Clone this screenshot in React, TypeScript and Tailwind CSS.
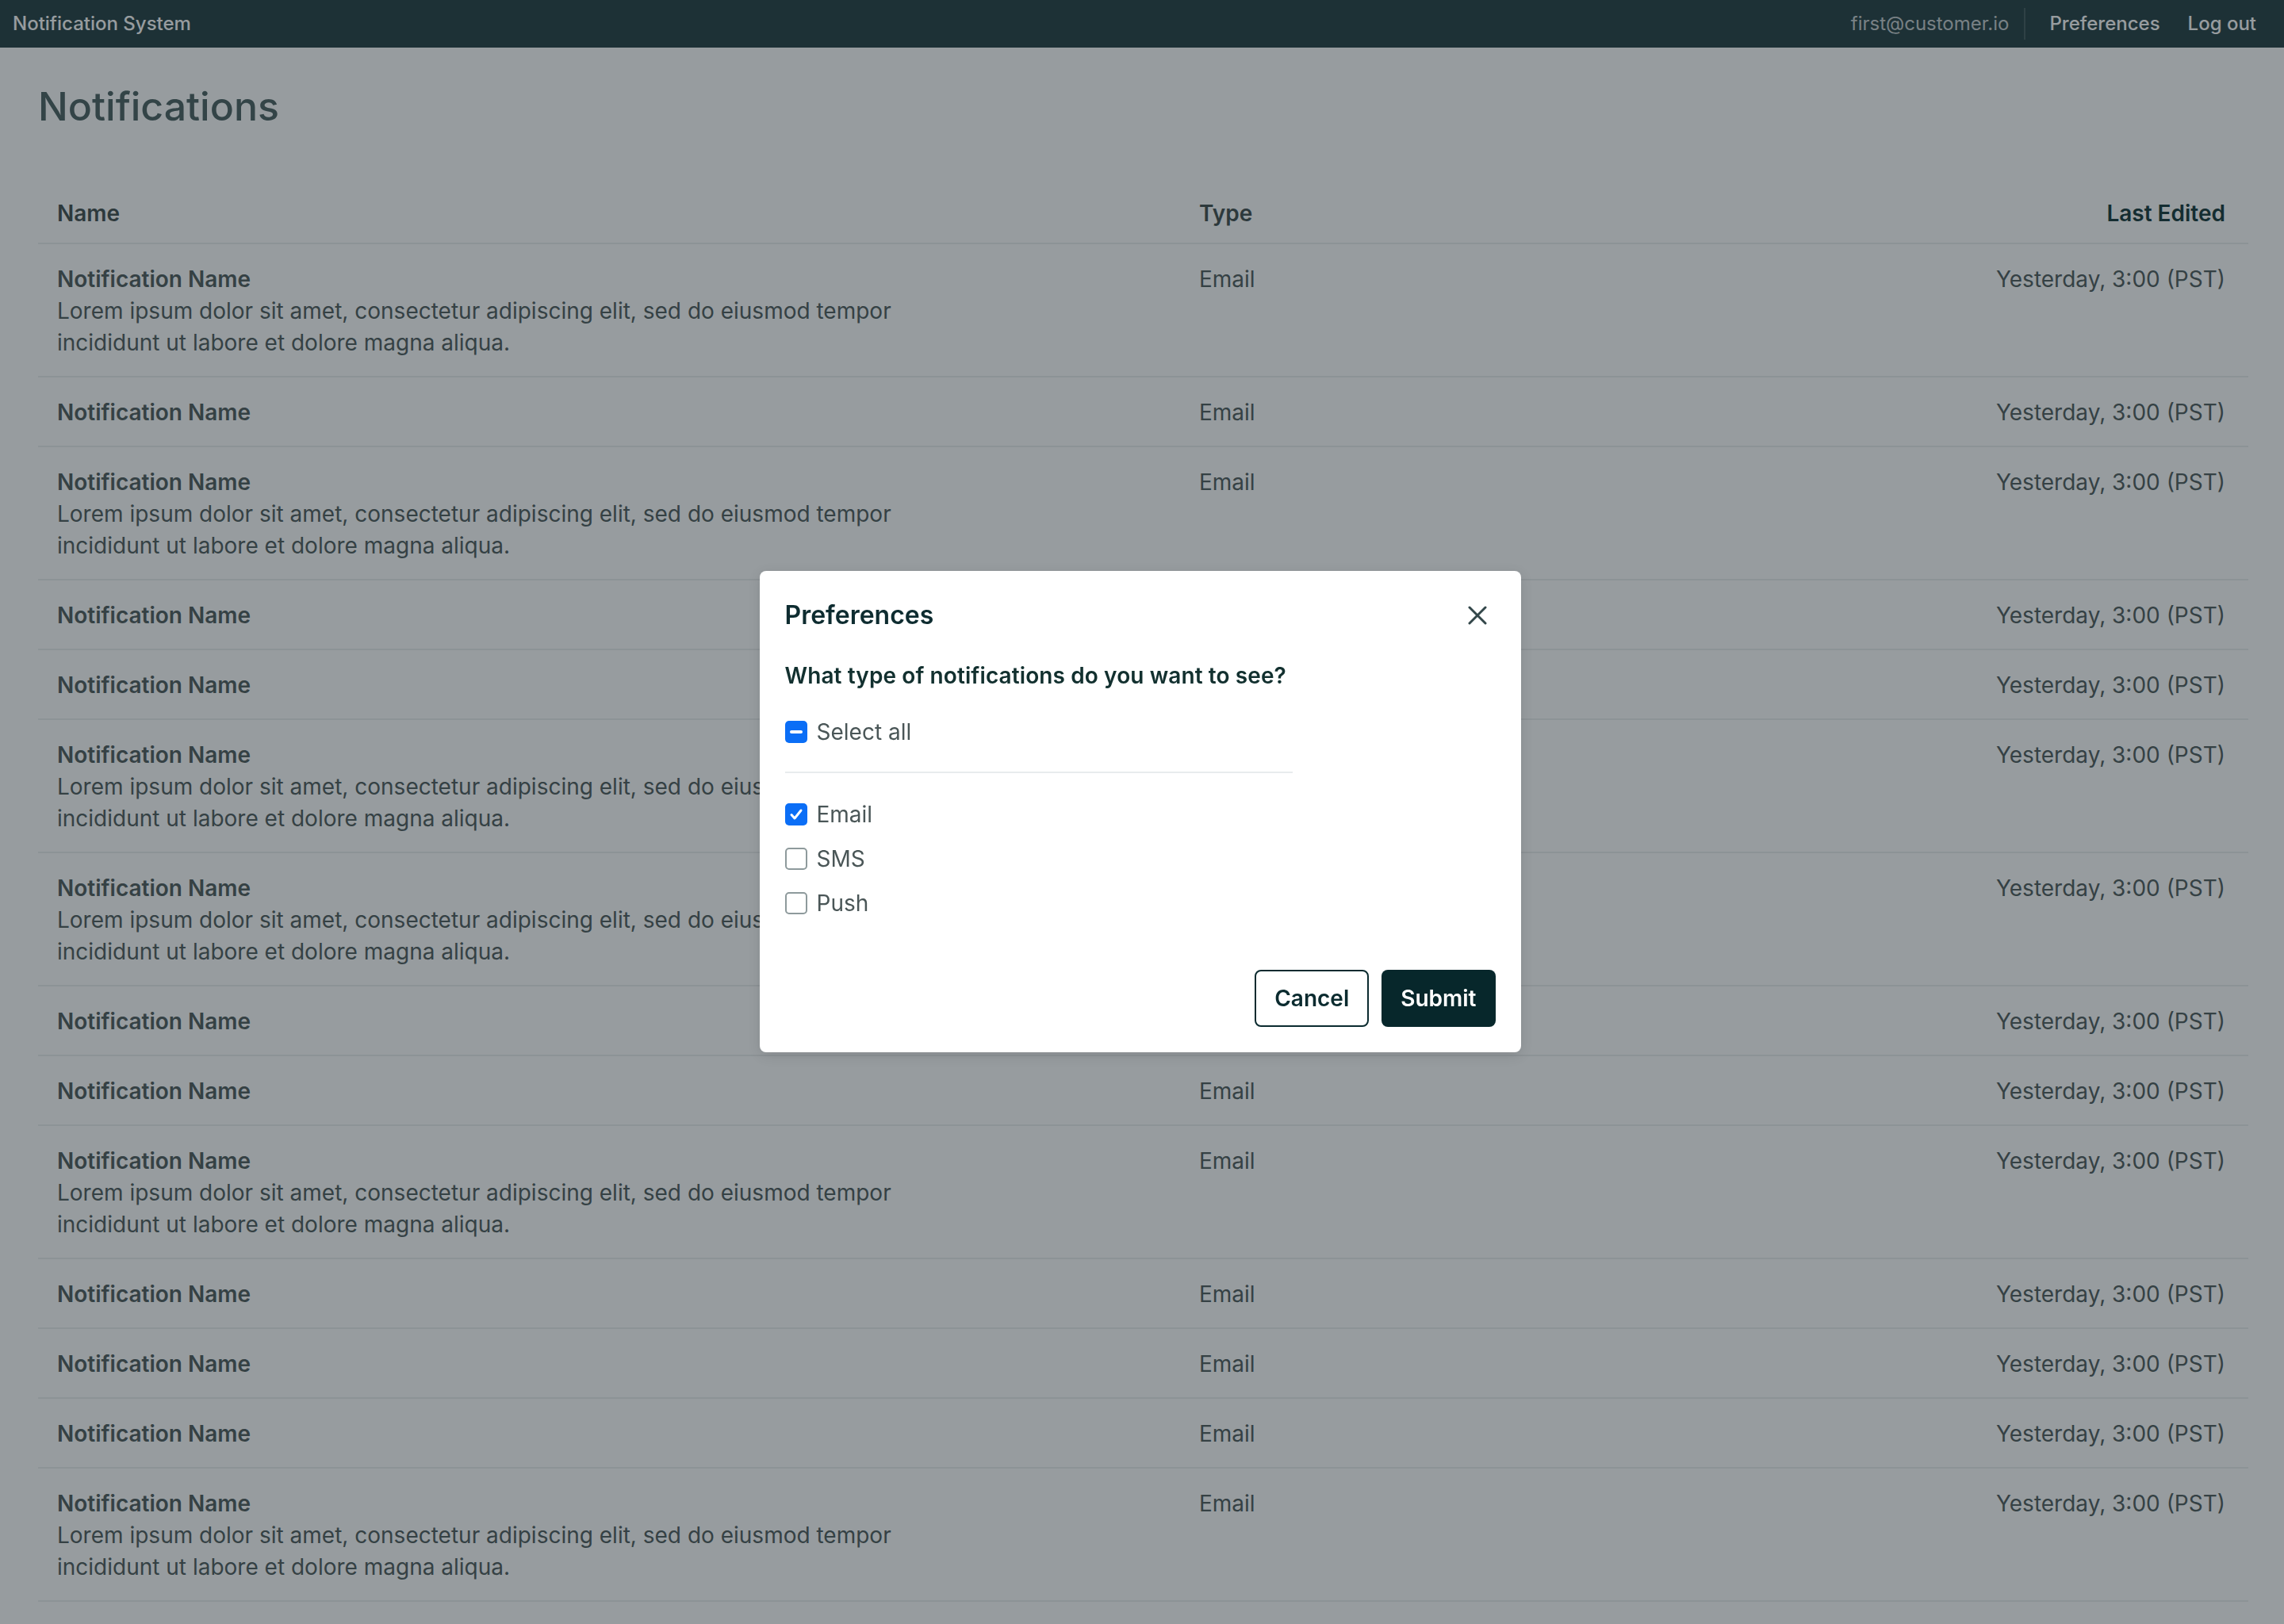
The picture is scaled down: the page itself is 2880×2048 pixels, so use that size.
import { useState } from "react";

type Row = { name: string; desc?: boolean; type: string; edited: string };

const LOREM_1 = "Lorem ipsum dolor sit amet, consectetur adipiscing elit, sed do eiusmod tempor";
const LOREM_2 = "incididunt ut labore et dolore magna aliqua.";

const pattern = [true, false, true, false, false, true, true, false, false, true, false, false, false, true];

const rows: Row[] = pattern.map((desc) => ({
  name: "Notification Name",
  desc,
  type: "Email",
  edited: "Yesterday, 3:00 (PST)",
}));

function Checkbox({
  state,
  label,
  onClick,
}: {
  state: "checked" | "unchecked" | "indeterminate";
  label: string;
  onClick?: () => void;
}) {
  return (
    <label className="flex h-[40px] items-center gap-[12px] cursor-pointer" onClick={onClick}>
      {state === "unchecked" ? (
        <span className="h-[28px] w-[28px] rounded-[5px] border-2 border-[#8e9a9c] bg-white" />
      ) : (
        <span className="flex h-[28px] w-[28px] items-center justify-center rounded-[5px] bg-[#0b6ef6]">
          {state === "checked" ? (
            <svg width="20" height="20" viewBox="0 0 20 20" fill="none">
              <path d="M4 10.5l4 4.5 8-10" stroke="white" strokeWidth="3" strokeLinecap="round" strokeLinejoin="round" />
            </svg>
          ) : (
            <span className="h-[4px] w-[16px] rounded-full bg-white" />
          )}
        </span>
      )}
      <span className="text-[28px] leading-[40px] text-[#4a5657]">{label}</span>
    </label>
  );
}

function PreferencesModal() {
  const [email, setEmail] = useState(true);
  const [sms, setSms] = useState(false);
  const [push, setPush] = useState(false);
  const count = [email, sms, push].filter(Boolean).length;
  const all = count === 3 ? "checked" : count === 0 ? "unchecked" : "indeterminate";

  return (
    <div className="fixed inset-0 flex items-center justify-center bg-[rgba(24,35,42,0.45)] pb-[1px] pr-[5px]">
      <div className="flex w-[960px] flex-col rounded-[8px] bg-white p-[32px] shadow-[0_4px_16px_rgba(0,0,0,0.12)]">
        <div className="flex h-[48px] items-center justify-between">
          <h2 className="text-[32px] font-semibold leading-[48px] text-[#0e2c30]">Preferences</h2>
          <button className="flex h-[46px] w-[46px] items-center justify-center">
            <svg width="24" height="24" viewBox="0 0 24 24" fill="none">
              <path d="M2 2l20 20M22 2L2 22" stroke="#33474a" strokeWidth="3" strokeLinecap="round" />
            </svg>
          </button>
        </div>
        <p className="mt-[32px] text-[28px] font-semibold leading-[40px] tracking-[0.1px] text-[#12302f]">
          What type of notifications do you want to see?
        </p>
        <div className="mt-[31px]">
          <Checkbox
            state={all}
            label="Select all"
            onClick={() => {
              const v = all !== "checked";
              setEmail(v);
              setSms(v);
              setPush(v);
            }}
          />
        </div>
        <div className="mt-[30px] h-[2px] w-[640px] bg-[#e8eced]" />
        <div className="mt-[32px] flex flex-col gap-[16px]">
          <Checkbox state={email ? "checked" : "unchecked"} label="Email" onClick={() => setEmail(!email)} />
          <Checkbox state={sms ? "checked" : "unchecked"} label="SMS" onClick={() => setSms(!sms)} />
          <Checkbox state={push ? "checked" : "unchecked"} label="Push" onClick={() => setPush(!push)} />
        </div>
        <div className="mt-[64px] flex justify-end gap-[16px]">
          <button className="h-[72px] rounded-[8px] border-2 border-[#0b2b2f] bg-white px-[23px] text-[28px] font-semibold text-[#0b2b2f]">
            Cancel
          </button>
          <button className="h-[72px] rounded-[8px] bg-[#07272b] px-[24px] text-[28px] font-semibold text-white">
            Submit
          </button>
        </div>
      </div>
    </div>
  );
}

export default function App() {
  return (
    <div className="relative h-[2048px] overflow-hidden bg-white font-['Inter','Noto_Sans',sans-serif]">
      <nav className="flex h-[60px] items-center justify-between bg-[#213c40] pl-[16px] pr-[35px] text-[24px]">
        <span className="font-medium text-white">Notification System</span>
        <div className="flex items-center">
          <span className="text-white/75">first@customer.io</span>
          <span className="ml-[19px] h-[40px] w-[2px] bg-white/15" />
          <a className="ml-[30px] font-medium text-white">Preferences</a>
          <a className="ml-[35px] font-medium text-white">Log out</a>
        </div>
      </nav>

      <main className="pl-[48px] pr-[45px] pt-[42px]">
        <h1 className="text-[50px] font-medium leading-[64px] text-[#4a5f60]">Notifications</h1>

        <div className="mt-[59px]">
          <div className="grid grid-cols-[1440px_1fr_auto] border-b-2 border-[#eceeef] pb-[17px] pt-[24px] text-[28px] font-semibold leading-[40px]">
            <div className="px-[24px] text-[#3e4c4c]">Name</div>
            <div className="px-[24px] text-[#3e4c4c]">Type</div>
            <div className="pl-[24px] pr-[29px] text-right text-[#123538]">Last Edited</div>
          </div>
          {rows.map((r, i) => (
            <div
              key={i}
              className="grid grid-cols-[1440px_1fr_auto] border-b-2 border-[#eceeef] pb-[22px] pt-[24px] text-[28px] leading-[40px] text-[#4d595a]"
            >
              <div className="px-[24px]">
                <div className="font-semibold">{r.name}</div>
                {r.desc && (
                  <p>
                    {LOREM_1}
                    <br />
                    {LOREM_2}
                  </p>
                )}
              </div>
              <div className="px-[24px]">{r.type}</div>
              <div className="pl-[24px] pr-[29px] text-right">{r.edited}</div>
            </div>
          ))}
        </div>
      </main>

      <PreferencesModal />
    </div>
  );
}
